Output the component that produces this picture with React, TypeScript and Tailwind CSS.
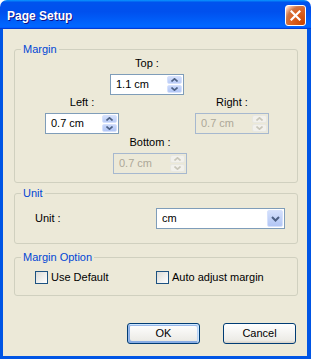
import React from 'react';

const Arrow = ({ up, disabled }: { up: boolean; disabled?: boolean }) => (
  <svg width="7" height="4" viewBox="0 0 7 4" className="block">
    <path
      d={up ? 'M0.5 3.5 L3.5 0.8 L6.5 3.5' : 'M0.5 0.5 L3.5 3.2 L6.5 0.5'}
      fill="none"
      stroke={disabled ? '#C9C7BA' : '#4D6185'}
      strokeWidth="1.6"
    />
  </svg>
);

const Spin = ({ value, disabled }: { value: string; disabled?: boolean }) => (
  <div
    className={
      disabled
        ? 'flex h-[21px] w-[74px] border border-[#A6B8CF] bg-[#ECE9D8] text-[#ACA899]'
        : 'flex h-[21px] w-[74px] border border-[#7F9DB9] bg-white text-black'
    }
  >
    <div className="flex-1 pl-[5px] leading-[19px]">{value}</div>
    <div className="my-[1px] mr-[1px] flex w-[15px] flex-col gap-[1px]">
      <div
        className={
          disabled
            ? 'flex flex-1 items-center justify-center rounded-[2px] border border-[#E8E8E2] bg-[#F2F1EC]'
            : 'flex flex-1 items-center justify-center rounded-[2px] border border-[#D6E1FC] bg-gradient-to-b from-[#D4E0FC] to-[#B9CBF6]'
        }
      >
        <Arrow up disabled={disabled} />
      </div>
      <div
        className={
          disabled
            ? 'flex flex-1 items-center justify-center rounded-[2px] border border-[#E8E8E2] bg-[#F2F1EC]'
            : 'flex flex-1 items-center justify-center rounded-[2px] border border-[#D6E1FC] bg-gradient-to-b from-[#C9D8FB] to-[#B2C6F5]'
        }
      >
        <Arrow up={false} disabled={disabled} />
      </div>
    </div>
  </div>
);

const Field = ({ label, value, disabled }: { label: string; value: string; disabled?: boolean }) => (
  <div className="flex w-[74px] flex-col items-center gap-[4px]">
    <div className="leading-[13px]">{label}</div>
    <Spin value={value} disabled={disabled} />
  </div>
);

const Group = ({ title, children }: { title: string; children: React.ReactNode }) => (
  <fieldset className="rounded-[3px] border border-[#D0D0BF]">
    <legend className="ml-[6px] px-[2px] leading-[13px] text-[#0046D5]">{title}</legend>
    {children}
  </fieldset>
);

const Check = ({ label }: { label: string }) => (
  <label className="flex items-center gap-[3px] leading-[13px]">
    <span className="block h-[13px] w-[13px] border border-[#1D5281] bg-gradient-to-br from-[#DCDCD7] to-white" />
    {label}
  </label>
);

export default function App() {
  return (
    <div className="flex h-[359px] w-[311px] flex-col font-['Liberation_Sans',Arial,sans-serif] text-[11px] text-black">
      <div className="flex h-[29px] shrink-0 items-start justify-between rounded-t-[7px] bg-[linear-gradient(180deg,#0997ff,#0053ee_8%,#0050ee_40%,#0066ff_88%,#0066ff_93%,#005bff_95%,#003dd7_96%,#003dd7)] pl-[7px] pr-[5px]">
        <div className="mt-[9px] text-[12px] font-bold leading-[14px] text-white [text-shadow:1px_1px_0_#0f1089]">
          Page Setup
        </div>
        <div className="mt-[5px] flex h-[21px] w-[21px] items-center justify-center rounded-[3px] border border-white bg-[radial-gradient(circle_at_90%_90%,#cc4600_0%,#dc6527_55%,#cd7546_70%,#ffccb2_90%,#fff_100%)] bg-[#E0532F]">
          <svg width="11" height="11" viewBox="0 0 11 11">
            <path d="M1.5 1.5 L9.5 9.5 M9.5 1.5 L1.5 9.5" stroke="white" strokeWidth="2.2" strokeLinecap="square" />
          </svg>
        </div>
      </div>

      <div className="flex flex-1 flex-col border-b-[3px] border-l-[3px] border-r-[4px] border-[#0055E5] bg-[#ECE9D8] pl-[11px] pr-[9px] pt-[14px]">
        <Group title="Margin">
          <div className="pb-[8px] pt-[1px]">
            <div className="ml-[95px]">
              <Field label="Top :" value="1.1 cm" />
            </div>
            <div className="mt-[1px] flex">
              <div className="ml-[30px]">
                <Field label="Left :" value="0.7 cm" />
              </div>
              <div className="ml-[76px]">
                <Field label="Right :" value="0.7 cm" disabled />
              </div>
            </div>
            <div className="ml-[98px] mt-[2px]">
              <Field label="Bottom :" value="0.7 cm" disabled />
            </div>
          </div>
        </Group>

        <div className="mt-[4px]">
          <Group title="Unit">
            <div className="flex items-center pb-[14px] pl-[20px] pt-[8px]">
              <div className="w-[121px] leading-[13px]">Unit :</div>
              <div className="flex h-[21px] w-[129px] items-center border border-[#7F9DB9] bg-white">
                <div className="flex-1 pl-[5px]">cm</div>
                <div className="mr-[1px] flex h-[17px] w-[16px] items-center justify-center rounded-[2px] border border-[#D6E1FC] bg-gradient-to-b from-[#D4E0FC] to-[#B2C6F5]">
                  <svg width="9" height="6" viewBox="0 0 9 6">
                    <path d="M1 1 L4.5 4.5 L8 1" fill="none" stroke="#4D6185" strokeWidth="2" />
                  </svg>
                </div>
              </div>
            </div>
          </Group>
        </div>

        <div className="mt-[7px]">
          <Group title="Margin Option">
            <div className="flex pb-[11px] pl-[20px] pt-[7px]">
              <div className="w-[121px]">
                <Check label="Use Default" />
              </div>
              <Check label="Auto adjust margin" />
            </div>
          </Group>
        </div>

        <div className="mr-[2px] mt-[27px] flex justify-end gap-[23px]">
          <button className="h-[21px] w-[73px] rounded-[3px] border border-[#003C74] bg-[linear-gradient(180deg,#fff,#ecebe6_86%,#d6d0c5)] leading-[19px] shadow-[inset_-1px_1px_#cee7ff,inset_1px_2px_#98b8ea,inset_-2px_2px_#bcd4f6,inset_1px_-1px_#89ade4,inset_2px_-2px_#89ade4]">
            OK
          </button>
          <button className="h-[21px] w-[73px] rounded-[3px] border border-[#003C74] bg-[linear-gradient(180deg,#fff,#ecebe6_86%,#d6d0c5)] leading-[19px]">
            Cancel
          </button>
        </div>
      </div>
    </div>
  );
}
